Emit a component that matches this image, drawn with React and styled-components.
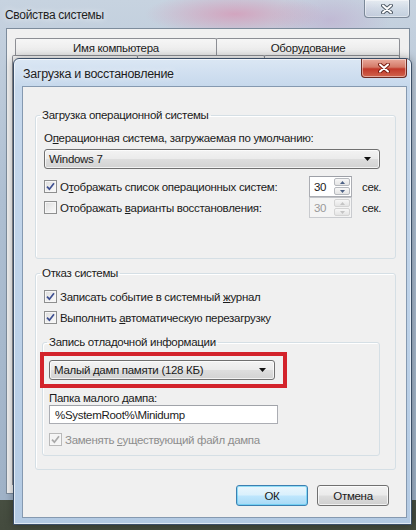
import styled, { createGlobalStyle } from 'styled-components';

const GlobalStyle = createGlobalStyle`
  html, body { margin: 0; padding: 0; }
  body {
    font-family: 'Liberation Sans', Arial, sans-serif;
    font-size: 11.5px;
    letter-spacing: -0.3px;
    color: #1b1b1b;
  }
`;

const Desktop = styled.div`
  position: relative;
  width: 416px;
  height: 530px;
  overflow: hidden;
  background: linear-gradient(180deg, #7d8a78 0%, #444b3e 100%);
`;

/* ---------- back window: Свойства системы ---------- */

const OuterWindow = styled.div`
  position: absolute;
  left: 0;
  top: 0;
  width: 416px;
  height: 500px;
  display: flex;
  flex-direction: column;
  background:
    radial-gradient(ellipse 90px 22px at 235px 14px, rgba(214, 150, 180, 0.75), transparent),
    radial-gradient(ellipse 60px 30px at 330px 20px, rgba(190, 170, 205, 0.6), transparent),
    linear-gradient(180deg, #c7d3e0 0%, #aebfd2 40%, #9fb2c7 100%);
`;

const OuterTitleBar = styled.div`
  height: 28px;
  display: flex;
  justify-content: space-between;
  align-items: flex-start;
  padding-left: 5px;
`;

const WindowTitle = styled.span`
  align-self: center;
  padding-top: 2px;
  font-size: ${(p) => (p.$main ? 12.5 : 12)}px;
  color: #1e1e1e;
  text-shadow: 0 0 6px rgba(255, 255, 255, 0.9);
`;

const CloseButton = styled.div`
  width: 46px;
  height: ${(p) => (p.$active ? 19 : 18)}px;
  margin-right: ${(p) => (p.$active ? 4 : 6)}px;
  border: 1px solid ${(p) => (p.$active ? '#6b2a22' : '#7b8898')};
  border-top: none;
  border-radius: 0 0 4px 4px;
  box-sizing: border-box;
  display: flex;
  align-items: center;
  justify-content: center;
  background: ${(p) =>
    p.$active
      ? 'linear-gradient(180deg, #e9a99b 0%, #d47a68 45%, #c2392a 55%, #d0644c 100%)'
      : 'linear-gradient(180deg, rgba(255,255,255,0.55) 0%, rgba(225,232,240,0.4) 50%, rgba(190,203,218,0.4) 100%)'};
  box-shadow: inset 0 0 0 1px rgba(255, 255, 255, 0.45);
`;

const OuterContent = styled.div`
  flex: 1;
  margin: 0 6px 6px 6px;
  background: #f0f0f0;
  border: 1px solid #7d8c9c;
  display: flex;
  flex-direction: column;
`;

const TabRow = styled.div`
  display: flex;
  padding-left: ${(p) => p.$indent}px;
  margin-top: ${(p) => p.$top}px;
`;

const Tab = styled.div`
  width: ${(p) => p.$w}px;
  height: 19px;
  box-sizing: border-box;
  border: 1px solid #8c8e94;
  border-bottom: none;
  margin-right: -1px;
  border-radius: 2px 2px 0 0;
  background: linear-gradient(180deg, #f6f6f6 0%, #e6e6e6 100%);
  display: flex;
  align-items: center;
  justify-content: center;
`;

const TabPage = styled.div`
  flex: 1;
  margin: 0 8px 8px 5px;
  border: 1px solid #8c8e94;
  background: #fbfbfb;
`;

/* ---------- front dialog: Загрузка и восстановление ---------- */

const Dialog = styled.div`
  position: absolute;
  left: 13px;
  top: 58px;
  width: 399px;
  height: 467px;
  box-sizing: border-box;
  border: 1px solid #3b4e66;
  border-radius: 6px 6px 0 0;
  display: flex;
  flex-direction: column;
  background: linear-gradient(180deg, #dbe7f4 0%, #c6d8ec 6%, #bcd1e8 60%, #b3cae3 100%);
  box-shadow: inset 0 0 0 1px rgba(255, 255, 255, 0.6), 0 0 8px rgba(0, 0, 0, 0.35);
`;

const DialogTitleBar = styled.div`
  height: 27px;
  display: flex;
  justify-content: space-between;
  align-items: flex-start;
  padding-left: 9px;
`;

const DialogBody = styled.div`
  flex: 1;
  margin: 0 4px 6px 8px;
  background: #f0f0f0;
  border: 1px solid #8599b0;
  display: flex;
  flex-direction: column;
  padding: 21px 10px 0 12px;
`;

const Group = styled.fieldset`
  margin: ${(p) => p.$mt || 0}px 0 0 0;
  padding: 0;
  border: 1px solid #d5dfe5;
  border-radius: 3px;
  box-shadow: inset 1px 1px 0 #fff;
  min-width: 0;
`;

const Legend = styled.legend`
  margin-left: 4px;
  padding: 0 2px;
  line-height: 14px;
  color: #1b1b1b;
`;

const GroupBody = styled.div`
  display: flex;
  flex-direction: column;
  padding: ${(p) => p.$pad};
`;

const Label = styled.div`
  line-height: ${(p) => p.$lh || 16}px;
  margin-top: ${(p) => p.$mt || 0}px;
  color: #1b1b1b;
`;

const ComboBox = styled.div`
  position: relative;
  width: ${(p) => p.$w}px;
  height: 20px;
  box-sizing: border-box;
  margin-top: ${(p) => p.$mt || 0}px;
  border: 1px solid #707070;
  border-radius: 3px;
  background: linear-gradient(180deg, #f3f3f3 0%, #ebebeb 48%, #dddddd 52%, #d2d2d2 100%);
  box-shadow: inset 0 0 0 1px rgba(255, 255, 255, 0.7);
  display: flex;
  align-items: center;
  justify-content: space-between;
  padding: 0 8px 0 4px;
  ${(p) =>
    p.$marked &&
    `&::after {
      content: '';
      position: absolute;
      left: -10px;
      right: -13px;
      top: -9px;
      bottom: -9px;
      border: 4px solid #d3232b;
    }`}
`;

const Row = styled.div`
  height: 21px;
  display: flex;
  align-items: center;
  margin-top: ${(p) => p.$mt || 0}px;
  margin-left: ${(p) => p.$ml || 0}px;
  color: ${(p) => (p.$disabled ? '#8d8d8d' : '#1b1b1b')};
`;

const CheckBox = styled.span`
  width: 13px;
  height: 13px;
  box-sizing: border-box;
  flex: none;
  border: 1px solid ${(p) => (p.$disabled ? '#b9b9b9' : '#8e8f8f')};
  background: ${(p) =>
    p.$disabled
      ? '#f4f4f4'
      : 'linear-gradient(135deg, #dcdcdc 0%, #f0f0f0 60%, #fafafa 100%)'};
  box-shadow: inset 0 0 0 1px #f6f6f6;
  margin-right: 3px;
  display: flex;
  align-items: center;
  justify-content: center;
`;

const RowText = styled.span`
  flex: 1;
  white-space: nowrap;
`;

const SpinBox = styled.div`
  width: 43px;
  height: 21px;
  flex: none;
  box-sizing: border-box;
  border: 1px solid ${(p) => (p.$disabled ? '#c9cbcf' : '#abadb3')};
  border-top-color: ${(p) => (p.$disabled ? '#c2c4c8' : '#9da0a7')};
  background: ${(p) => (p.$disabled ? '#f4f4f4' : '#fff')};
  display: flex;
  align-items: stretch;
  color: ${(p) => (p.$disabled ? '#9a9a9a' : '#1b1b1b')};
`;

const SpinValue = styled.span`
  flex: 1;
  display: flex;
  align-items: center;
  padding-left: 4px;
`;

const SpinButtons = styled.div`
  width: 16px;
  display: flex;
  flex-direction: column;
  gap: 1px;
  padding: 1px 1px 1px 0;
`;

const SpinArrow = styled.div`
  flex: 1;
  border: 1px solid ${(p) => (p.$disabled ? '#d4d4d4' : '#b6b9be')};
  border-radius: 2px;
  background: linear-gradient(180deg, #f7f7f7 0%, #e4e4e4 100%);
  display: flex;
  align-items: center;
  justify-content: center;
`;

const Unit = styled.span`
  margin-left: 10px;
  width: 18px;
  flex: none;
  white-space: nowrap;
`;

const TextInput = styled.div`
  width: 229px;
  height: 19px;
  box-sizing: border-box;
  border: 1px solid #abadb3;
  border-top-color: #a0a3a9;
  background: #fff;
  display: flex;
  align-items: center;
  padding-left: 5px;
`;

const ButtonBar = styled.div`
  display: flex;
  justify-content: flex-end;
  gap: 9px;
  margin-top: 15px;
  padding-right: 7px;
`;

const Button = styled.div`
  width: 72px;
  height: 21px;
  box-sizing: border-box;
  border: 1px solid ${(p) => (p.$default ? '#3c7fb1' : '#707070')};
  border-radius: 3px;
  background: ${(p) =>
    p.$default
      ? 'linear-gradient(180deg, #eaf6fd 0%, #d9f0fc 48%, #bee6fd 52%, #a7d9f5 100%)'
      : 'linear-gradient(180deg, #f2f2f2 0%, #ebebeb 48%, #dddddd 52%, #cfcfcf 100%)'};
  box-shadow: inset 0 0 0 1px ${(p) => (p.$default ? 'rgba(72, 200, 240, 0.55)' : 'rgba(255,255,255,0.7)')};
  display: flex;
  align-items: center;
  justify-content: center;
  color: #1b1b1b;
`;

const Check = ({ disabled }) => (
  <svg width="9" height="9" viewBox="0 0 9 9">
    <path
      d="M1 4.6 L3.4 7.2 L8 1.2"
      fill="none"
      stroke={disabled ? '#a9a9a9' : '#3d4f91'}
      strokeWidth="1.7"
    />
  </svg>
);

const DownTriangle = () => (
  <svg width="7" height="4" viewBox="0 0 7 4">
    <path d="M0 0 H7 L3.5 4 Z" fill="#111" />
  </svg>
);

const Cross = ({ active }) => (
  <svg width="12" height="10" viewBox="0 0 12 10">
    <path
      d="M2 1.5 L10 8.5 M10 1.5 L2 8.5"
      stroke={active ? '#7a1d12' : '#4f5a66'}
      strokeWidth="4"
      strokeLinecap="round"
    />
    <path d="M2 1.5 L10 8.5 M10 1.5 L2 8.5" stroke="#fff" strokeWidth="2" strokeLinecap="round" />
  </svg>
);

const Arrow = ({ up, disabled }) => (
  <svg width="5" height="3" viewBox="0 0 5 3">
    <path d={up ? 'M0 3 L2.5 0 L5 3 Z' : 'M0 0 L5 0 L2.5 3 Z'} fill={disabled ? '#c4c4c4' : '#4d6185'} />
  </svg>
);

function CheckRow({ checked, disabled, children, mt, ml, extra }) {
  return (
    <Row $mt={mt} $ml={ml} $disabled={disabled}>
      <CheckBox $disabled={disabled}>{checked && <Check disabled={disabled} />}</CheckBox>
      <RowText>{children}</RowText>
      {extra}
    </Row>
  );
}

function Spinner({ value, disabled }) {
  return (
    <>
      <SpinBox $disabled={disabled}>
        <SpinValue>{value}</SpinValue>
        <SpinButtons>
          <SpinArrow $disabled={disabled}>
            <Arrow up disabled={disabled} />
          </SpinArrow>
          <SpinArrow $disabled={disabled}>
            <Arrow disabled={disabled} />
          </SpinArrow>
        </SpinButtons>
      </SpinBox>
      <Unit>сек.</Unit>
    </>
  );
}

export default function App() {
  return (
    <Desktop>
      <GlobalStyle />
      <OuterWindow>
        <OuterTitleBar>
          <WindowTitle>Свойства системы</WindowTitle>
          <CloseButton>
            <Cross />
          </CloseButton>
        </OuterTitleBar>
        <OuterContent>
          <TabRow $indent={8} $top={9}>
            <Tab $w={202}>Имя компьютера</Tab>
            <Tab $w={184}>Оборудование</Tab>
          </TabRow>
          <TabRow $indent={5} $top={-2}>
            <Tab $w={126} />
            <Tab $w={128} />
            <Tab $w={136} />
          </TabRow>
          <TabPage />
        </OuterContent>
      </OuterWindow>

      <Dialog>
        <DialogTitleBar>
          <WindowTitle $main>Загрузка и восстановление</WindowTitle>
          <CloseButton $active>
            <Cross active />
          </CloseButton>
        </DialogTitleBar>
        <DialogBody>
          <Group>
            <Legend>Загрузка операционной системы</Legend>
            <GroupBody $pad="8px 15px 40px 8px">
              <Label>
                О<u>п</u>ерационная система, загружаемая по умолчанию:
              </Label>
              <ComboBox $w={336} $mt={3}>
                <span>Windows 7</span>
                <DownTriangle />
              </ComboBox>
              <CheckRow checked mt={7} extra={<Spinner value="30" />}>
                О<u>т</u>ображать список операционных систем:
              </CheckRow>
              <CheckRow extra={<Spinner value="30" disabled />}>
                Отображать <u>в</u>арианты восстановления:
              </CheckRow>
            </GroupBody>
          </Group>

          <Group $mt={7}>
            <Legend>Отказ системы</Legend>
            <GroupBody $pad="6px 15px 13px 6px">
              <CheckRow checked ml={2}>
                Записать событие в системный <u>ж</u>урнал
              </CheckRow>
              <CheckRow checked ml={2}>
                Выполнить <u>а</u>втоматическую перезагрузку
              </CheckRow>
              <Group $mt={7}>
                <Legend>Запись отладочной информации</Legend>
                <GroupBody $pad="11px 0 5px 6px">
                  <ComboBox $w={226} $marked>
                    <span>Малый дамп памяти (128 КБ)</span>
                    <DownTriangle />
                  </ComboBox>
                  <Label $lh={14} $mt={11}>
                    Папка малого дампа:
                  </Label>
                  <TextInput>%SystemRoot%\Minidump</TextInput>
                  <CheckRow checked disabled mt={5}>
                    Заменять <u>с</u>уществующий файл дампа
                  </CheckRow>
                </GroupBody>
              </Group>
            </GroupBody>
          </Group>

          <ButtonBar>
            <Button $default>ОК</Button>
            <Button>Отмена</Button>
          </ButtonBar>
        </DialogBody>
      </Dialog>
    </Desktop>
  );
}
